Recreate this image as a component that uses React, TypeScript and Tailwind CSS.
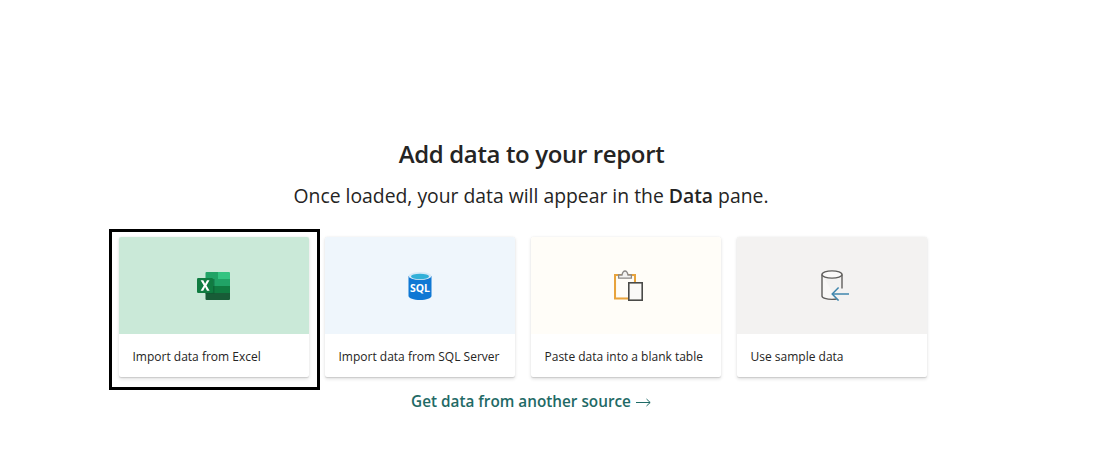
import React from "react";

function ExcelIcon() {
  return (
    <svg width="34" height="28" viewBox="0 0 34 28">
      <path d="M8.5 1a1 1 0 0 1 1-1H21v7H8.5z" fill="#21a366" />
      <path d="M21 0h11a1 1 0 0 1 1 1v6H21z" fill="#33c481" />
      <rect x="8.5" y="7" width="12.5" height="7" fill="#21a366" />
      <rect x="21" y="7" width="12" height="7" fill="#21a366" />
      <rect x="8.5" y="14" width="12.5" height="7" fill="#107c41" />
      <rect x="21" y="14" width="12" height="7" fill="#107c41" />
      <path d="M8.5 21H33v6a1 1 0 0 1-1 1H9.5a1 1 0 0 1-1-1z" fill="#185c37" />
      <rect x="8.5" y="7" width="9" height="15" fill="#0b5a30" opacity="0.55" />
      <rect x="0" y="6" width="16" height="15" rx="1.2" fill="#107c41" />
      <path d="M3.6 8.2h2.7l1.8 3.6 1.9-3.6h2.5l-3 5.2 3.1 5.4H10l-1.9-3.7-1.9 3.7H3.6l3.2-5.4z" fill="#fff" />
    </svg>
  );
}

function SqlIcon() {
  return (
    <svg width="24" height="28" viewBox="0 0 24 28">
      <path d="M0.5 4v20c0 2.2 5.2 4 11.5 4s11.5-1.8 11.5-4V4z" fill="#0f78d4" />
      <ellipse cx="12" cy="4" rx="11.5" ry="4" fill="#d7e9f7" />
      <ellipse cx="12" cy="4.5" rx="9" ry="2.7" fill="#32b0d8" />
      <text x="12" y="20" textAnchor="middle" fontFamily="'Open Sans', sans-serif" fontWeight="700" fontSize="10.5" fill="#fff">SQL</text>
    </svg>
  );
}

function PasteIcon() {
  return (
    <svg width="29" height="31" viewBox="0 0 29 31" fill="none" className="ml-[5px]">
      <rect x="1" y="5" width="20" height="23.5" fill="#fdf6e6" stroke="#e8a33c" strokeWidth="2" />
      <rect x="2.5" y="6.5" width="17" height="20.5" fill="#fffdf8" />
      <path d="M4.6 8.2V5H8C8.4 3 9.6 1 11 1s2.6 2 3 4h3.4v3.2z" fill="#f3f2f1" stroke="#8a8886" strokeWidth="1.3" />
      <rect x="14.8" y="12.8" width="13.4" height="17.4" fill="#faf9f8" stroke="#4a4a48" strokeWidth="1.6" />
    </svg>
  );
}

function SampleIcon() {
  return (
    <svg width="28" height="31" viewBox="0 0 28 31" fill="none" className="ml-[6px]">
      <path d="M1 4.5v21.5c0 1.9 4.5 3.4 10 3.4 1.7 0 3.3-.1 4.7-.4" stroke="#5f5e5c" strokeWidth="1.4" fill="#f8f7f6" />
      <path d="M21 4.5v14" stroke="#5f5e5c" strokeWidth="1.4" />
      <ellipse cx="11" cy="4.5" rx="10" ry="3.6" fill="#faf9f8" stroke="#5f5e5c" strokeWidth="1.4" />
      <path d="M28 24H11.5" stroke="#3f86ad" strokeWidth="1.5" />
      <path d="M17.6 17.4L11.2 24l6.4 6.6" stroke="#3f86ad" strokeWidth="1.5" />
    </svg>
  );
}

function Card({ bg, label, children, focused }: { bg: string; label: string; children: React.ReactNode; focused?: boolean }) {
  return (
    <div className="relative mr-4 w-[190px] h-[140px] flex flex-col bg-white rounded-[2px] shadow-[0_1.6px_3.6px_rgba(0,0,0,0.13),0_0.3px_0.9px_rgba(0,0,0,0.11)]">
      <div className={`h-[97px] flex items-center justify-center rounded-t-[2px] ${bg}`}>{children}</div>
      <div className="flex-1 flex items-center pl-[13.5px] pt-[2px] text-[12px] font-medium text-[#252423]">{label}</div>
      {focused && <div className="absolute -left-[10px] -right-[10.5px] -top-[8px] -bottom-[13px] border-[3px] border-black" />}
    </div>
  );
}

export default function App() {
  return (
    <div className="w-[1062px] h-[473px] bg-white flex flex-col items-center pt-[138px] font-['Open_Sans','Noto_Sans',sans-serif]">
      <h1 className="h-[32px] leading-[32px] text-[24px] font-semibold text-[#252423] tracking-[-0.36px] ml-[1px]">Add data to your report</h1>
      <p className="mt-[12px] h-[28px] leading-[28px] text-[19.35px] text-[#252423]">
        Once loaded, your data will appear in the <span className="font-semibold">Data</span> pane.
      </p>
      <div className="mt-[27px] flex">
        <Card bg="bg-[#cae9d8]" label="Import data from Excel" focused><ExcelIcon /></Card>
        <Card bg="bg-[#eff6fc]" label="Import data from SQL Server"><SqlIcon /></Card>
        <Card bg="bg-[#fffdf8]" label="Paste data into a blank table"><PasteIcon /></Card>
        <Card bg="bg-[#f3f2f1]" label="Use sample data"><SampleIcon /></Card>
      </div>
      <div className="mt-[12px] h-[24px] leading-[24px] text-[15.3px] font-semibold text-[#1f6a66] flex items-center">
        <span>Get data from another source</span>
        <svg width="15" height="9" viewBox="0 0 15 9" fill="none" stroke="#1f6a66" strokeWidth="1" className="ml-[5px] mt-[3px]">
          <path d="M0 4.5H14" />
          <path d="M10.5 1L14.2 4.5 10.5 8" />
        </svg>
      </div>
    </div>
  );
}
